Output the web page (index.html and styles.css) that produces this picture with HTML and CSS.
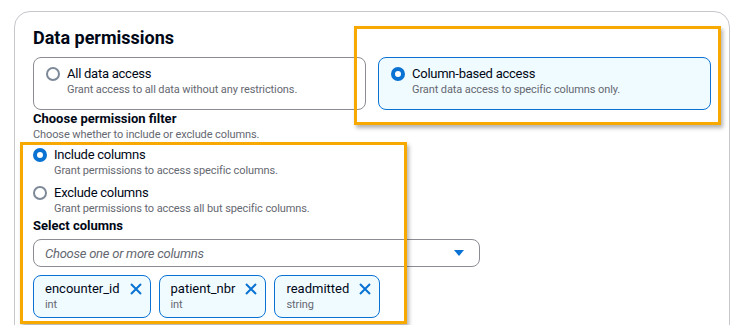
FILE: index.html
```html
<!DOCTYPE html>
<html lang="en">
<head>
    <meta charset="UTF-8">
    <title>Data permissions</title>
    <link rel="stylesheet" href="styles.css">
</head>
<body>
    <div class="page">
        <div class="panel">
            <div class="title">Data permissions</div>

            <div class="cards">
                <div class="card">
                    <span class="radio"></span>
                    <div>
                        <div class="label">All data access</div>
                        <div class="desc">Grant access to all data without any restrictions.</div>
                    </div>
                </div>
                <div class="card selected">
                    <span class="radio checked"></span>
                    <div>
                        <div class="label">Column-based access</div>
                        <div class="desc">Grant data access to specific columns only.</div>
                    </div>
                </div>
            </div>

            <div class="field-label">Choose permission filter</div>
            <div class="desc">Choose whether to include or exclude columns.</div>

            <div class="options">
                <div class="option">
                    <span class="radio checked"></span>
                    <div>
                        <div class="label">Include columns</div>
                        <div class="desc">Grant permissions to access specific columns.</div>
                    </div>
                </div>
                <div class="option">
                    <span class="radio"></span>
                    <div>
                        <div class="label">Exclude columns</div>
                        <div class="desc">Grant permissions to access all but specific columns.</div>
                    </div>
                </div>
            </div>

            <div class="field-label">Select columns</div>
            <div class="select">
                <span class="placeholder">Choose one or more columns</span>
                <svg class="caret" width="12" height="8" viewBox="0 0 12 8"><path d="M1 1h10L6 7z" fill="#0972d3"/></svg>
            </div>

            <div class="tokens">
                <div class="token">
                    <div>
                        <div class="token-label">encounter_id</div>
                        <div class="desc">int</div>
                    </div>
                    <svg class="dismiss" width="12" height="12" viewBox="0 0 12 12"><path d="M1 1l10 10M11 1L1 11" stroke="#0972d3" stroke-width="2" fill="none"/></svg>
                </div>
                <div class="token">
                    <div>
                        <div class="token-label">patient_nbr</div>
                        <div class="desc">int</div>
                    </div>
                    <svg class="dismiss" width="12" height="12" viewBox="0 0 12 12"><path d="M1 1l10 10M11 1L1 11" stroke="#0972d3" stroke-width="2" fill="none"/></svg>
                </div>
                <div class="token">
                    <div>
                        <div class="token-label">readmitted</div>
                        <div class="desc">string</div>
                    </div>
                    <svg class="dismiss" width="12" height="12" viewBox="0 0 12 12"><path d="M1 1l10 10M11 1L1 11" stroke="#0972d3" stroke-width="2" fill="none"/></svg>
                </div>
            </div>
        </div>

        <!-- highlight annotations -->
        <div class="highlight hl-access"></div>
        <div class="highlight hl-filter"></div>
    </div>
</body>
</html>
```

FILE: styles.css
```css
body {
    margin: 0;
    background: white;
    font-family: Roboto, "Liberation Sans", sans-serif;
    color: #000716;
    overflow: hidden;
}

.page {
    position: relative;
    height: 325px;
    padding: 11px 0 0 14px;
    box-sizing: border-box;
}

.panel {
    width: 716px;
    height: 340px;
    box-sizing: border-box;
    border: 1px solid #c6c6cd;
    border-radius: 16px;
    padding: 14px 18px 0 18px;
}

.title {
    font-size: 18px;
    font-weight: bold;
    line-height: 24px;
    margin-bottom: 7px;
}

.cards {
    display: grid;
    grid-template-columns: 1fr 1fr;
    gap: 12px;
}

.card {
    display: flex;
    align-items: flex-start;
    gap: 7px;
    border: 1px solid #8c8c94;
    border-radius: 8px;
    padding: 7px 12px 11px 12px;
}

.card.selected {
    background: #f0fbff;
    border-color: #0972d3;
}

.radio {
    width: 14px;
    height: 14px;
    box-sizing: border-box;
    border: 2px solid #7d8998;
    border-radius: 50%;
    margin-top: 2px;
    flex-shrink: 0;
    background: white;
}

.radio.checked {
    border: 4px solid #0972d3;
}

.label {
    font-size: 13px;
    line-height: 17px;
    letter-spacing: -0.25px;
}

.token-label {
    font-size: 13px;
    line-height: 17px;
}

.desc {
    font-size: 11px;
    line-height: 16px;
    letter-spacing: -0.1px;
    color: #656871;
}

.field-label {
    font-size: 13px;
    font-weight: bold;
    line-height: 17px;
}

.options {
    display: flex;
    flex-direction: column;
    gap: 5px;
    margin-top: 3px;
}

.option {
    display: flex;
    align-items: flex-start;
    gap: 7px;
}

.select {
    display: flex;
    align-items: center;
    justify-content: space-between;
    width: 447px;
    height: 28px;
    box-sizing: border-box;
    border: 1px solid #8c8c94;
    border-radius: 8px;
    padding: 0 14px 0 11px;
    margin-top: 5px;
}

.placeholder {
    font-size: 13px;
    font-style: italic;
    letter-spacing: -0.25px;
    color: #656871;
}

.tokens {
    display: flex;
    gap: 8px;
    margin-top: 8px;
}

.token {
    display: flex;
    align-items: flex-start;
    gap: 10px;
    background: #f0fbff;
    border: 1px solid #0972d3;
    border-radius: 8px;
    padding: 4px 8px 4px 11px;
}

.dismiss {
    margin-top: 3px;
}

.highlight {
    position: absolute;
    border: 3px solid #f7a900;
    box-shadow: 2px 3px 4px rgba(0, 0, 0, 0.3);
    pointer-events: none;
}

.hl-access {
    left: 354px;
    top: 26px;
    width: 361px;
    height: 93px;
}

.hl-filter {
    left: 20px;
    top: 142px;
    width: 381px;
    height: 176px;
}
```
